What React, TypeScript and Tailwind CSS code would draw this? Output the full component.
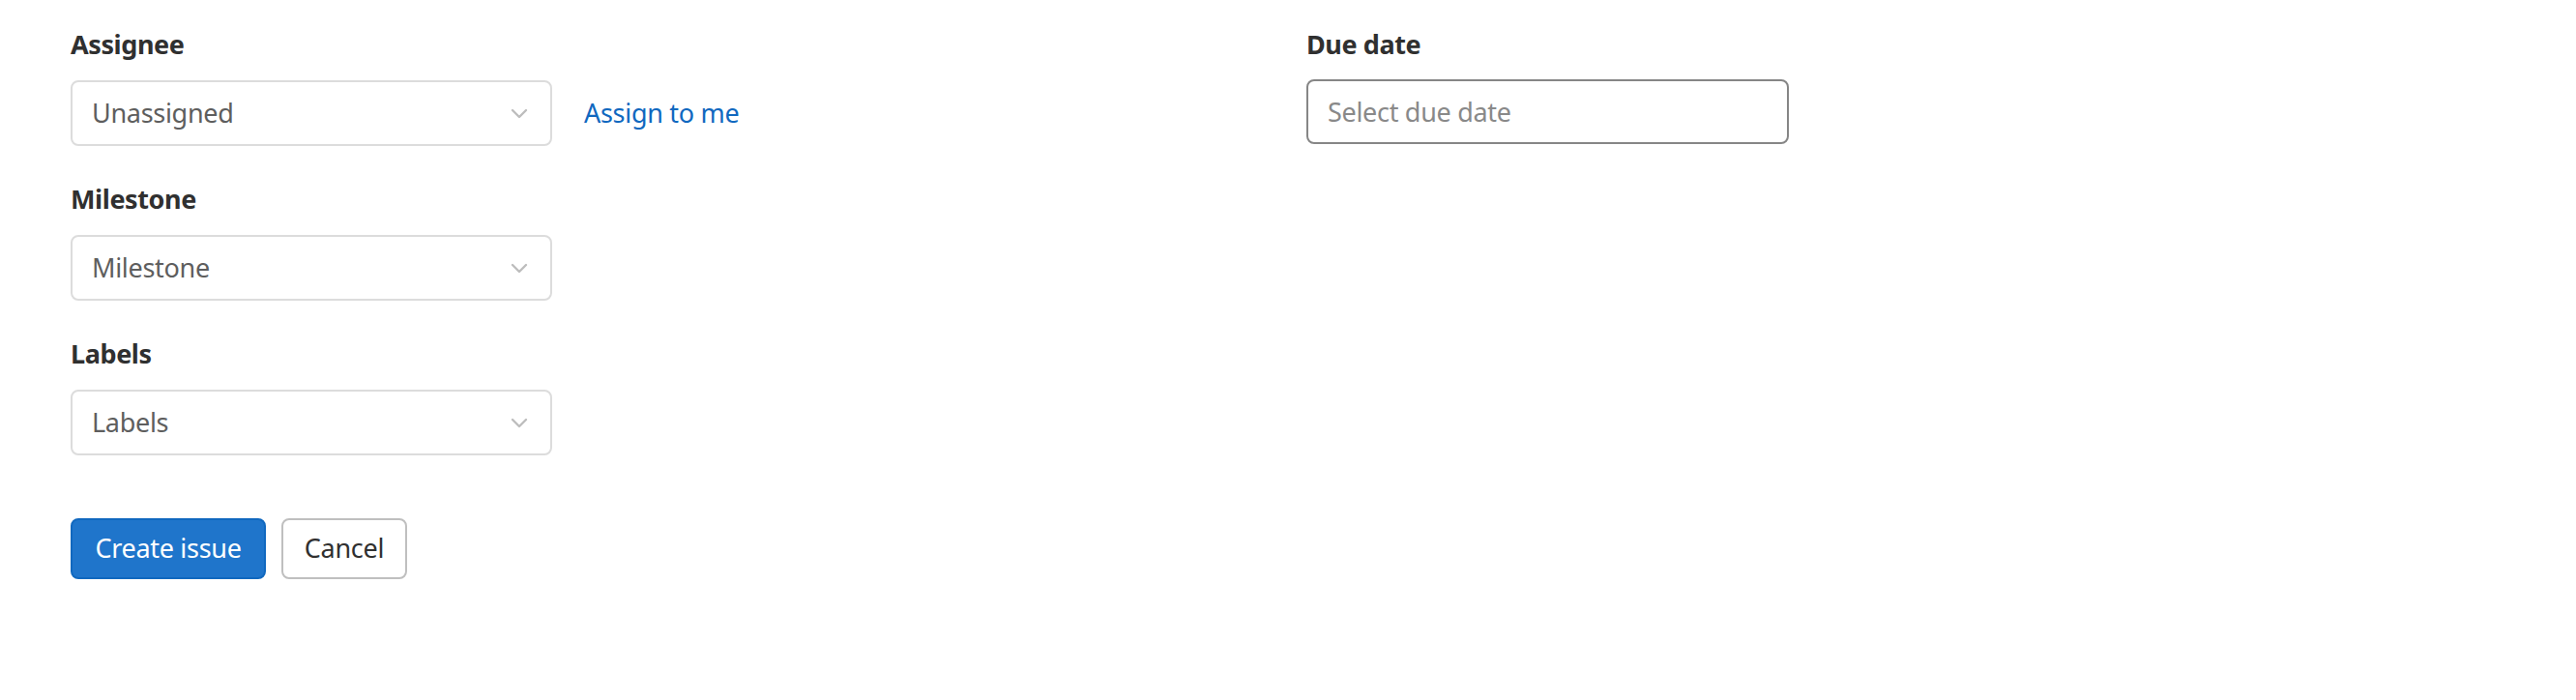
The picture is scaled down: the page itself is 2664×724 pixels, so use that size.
import { ReactNode } from 'react'

// ── Pieces ────────────────────────────────────────────────────────────────────

function FieldLabel({ children }: { children: ReactNode }) {
  return (
    <label className="block h-[40px] leading-[40px] mb-[17px] text-[27px] tracking-[-0.4px] font-bold text-[#303030]">
      {children}
    </label>
  )
}

function ChevronDown() {
  return (
    <svg width="18" height="11" viewBox="0 0 18 11" className="shrink-0">
      <path
        d="M2 2l7 7 7-7"
        fill="none"
        stroke="#bdbdbd"
        strokeWidth="2.4"
        strokeLinecap="round"
        strokeLinejoin="round"
      />
    </svg>
  )
}

function Dropdown({ text }: { text: string }) {
  return (
    <button
      type="button"
      className="w-[498px] h-[68px] shrink-0 flex items-center justify-between pl-[20px] pr-[23px] border-2 border-[#dcdcdc] rounded-[8px] bg-white text-[27px] tracking-[-0.3px] text-[#5e5e5e] text-left"
    >
      <span>{text}</span>
      <ChevronDown />
    </button>
  )
}

// ── Main ──────────────────────────────────────────────────────────────────────

export default function App() {
  return (
    <div
      className="bg-white min-h-screen px-[73px] pt-[26px]"
      style={{ fontFamily: "'Noto Sans', 'Open Sans', sans-serif" }}
    >
      <div className="grid grid-cols-2 gap-x-[38px]">
        {/* Left column */}
        <div className="flex flex-col gap-[35px]">
          <div>
            <FieldLabel>Assignee</FieldLabel>
            <div className="flex items-center gap-[33px]">
              <Dropdown text="Unassigned" />
              <a href="#" className="text-[27px] tracking-[-0.3px] text-[#1068bf]">
                Assign to me
              </a>
            </div>
          </div>
          <div>
            <FieldLabel>Milestone</FieldLabel>
            <Dropdown text="Milestone" />
          </div>
          <div>
            <FieldLabel>Labels</FieldLabel>
            <Dropdown text="Labels" />
          </div>
        </div>

        {/* Right column */}
        <div>
          <FieldLabel>Due date</FieldLabel>
          <input
            type="text"
            placeholder="Select due date"
            className="-mt-px w-[499px] h-[67px] px-[20px] border-2 border-[#868686] rounded-[8px] text-[27px] tracking-[-0.3px] text-[#303030] placeholder:text-[#898989] outline-none"
          />
        </div>
      </div>

      {/* Actions */}
      <div className="flex gap-[16px] mt-[65px]">
        <button
          type="button"
          className="w-[202px] h-[63px] flex items-center justify-center rounded-[8px] border-2 border-[#1068bf] bg-[#1f75cb] text-white text-[27px] tracking-[-0.3px]"
        >
          Create issue
        </button>
        <button
          type="button"
          className="w-[130px] h-[63px] flex items-center justify-center rounded-[8px] border-2 border-[#bfbfbf] bg-white text-[#303030] text-[27px] tracking-[-0.3px]"
        >
          Cancel
        </button>
      </div>
    </div>
  )
}
